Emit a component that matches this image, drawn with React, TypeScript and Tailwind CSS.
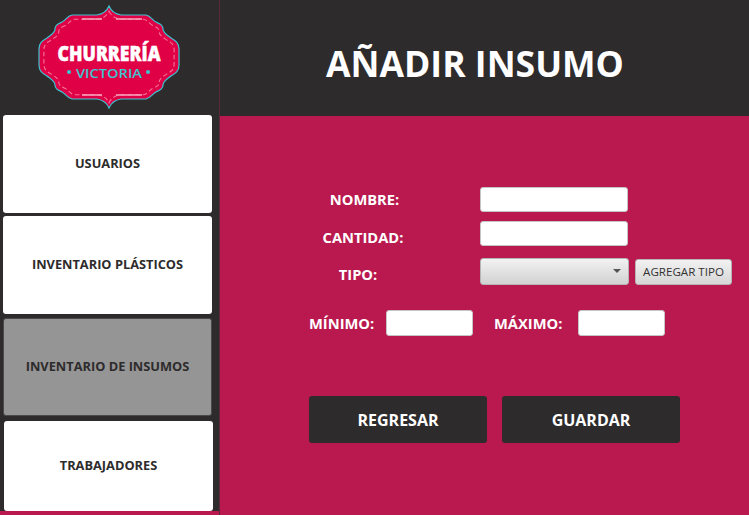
const menuBase =
  "flex items-center justify-center rounded-[3px] text-[12.8px] font-bold text-[#2d2b2c]";

const logoOutline =
  "M71 1 C73 6 77 9 83 10 L108 10 C113 11 114 15 118 17 C122 19 125 20 125 24 C125 28 129 30 133 33 C138 36 141 38 141 44 L141 60 C141 66 138 68 133 71 C129 74 125 76 125 80 C125 84 122 85 118 87 C114 89 113 93 108 94 L83 94 C77 95 73 98 71 103 C69 98 65 95 59 94 L34 94 C29 93 28 89 24 87 C20 85 17 84 17 80 C17 76 13 74 9 71 C4 68 1 66 1 60 L1 44 C1 38 4 36 9 33 C13 30 17 28 17 24 C17 20 20 19 24 17 C28 15 29 11 34 10 L59 10 C65 9 69 6 71 1 Z";

function Logo() {
  return (
    <svg width="142" height="104" viewBox="0 0 142 104" className="block">
      <path d={logoOutline} fill="#e00046" stroke="#3cc4d0" strokeWidth="1.2" />
      <path
        d={logoOutline}
        fill="none"
        stroke="#f27396"
        strokeWidth="1.2"
        strokeDasharray="5 3"
        transform="translate(71 52) scale(0.93 0.9) translate(-71 -52)"
      />
      <path d="M44 14 L64 14 M78 14 L104 14 M44 90 L64 90 M78 90 L104 90" stroke="#f9a6bc" strokeWidth="1.5" fill="none" />
      <text x="71" y="56" textAnchor="middle" textLength="103" lengthAdjust="spacingAndGlyphs" fontFamily="'Open Sans', sans-serif" fontWeight="800" fontSize="21" fill="#ffffff" stroke="#ffffff" strokeWidth="0.5">
        CHURRERÍA
      </text>
      <text x="71" y="72.5" textAnchor="middle" textLength="66" lengthAdjust="spacingAndGlyphs" fontFamily="'Open Sans', sans-serif" fontWeight="600" fontSize="13" fill="#3cc4d0">
        VICTORIA
      </text>
      <circle cx="31" cy="67" r="2" fill="#3cc4d0" />
      <circle cx="110" cy="67" r="2" fill="#3cc4d0" />
    </svg>
  );
}

function Field({ className }: { className: string }) {
  return <div className={`rounded-[3px] border border-[#c4c4c4] bg-white ${className}`} />;
}

export default function App() {
  return (
    <div className="flex h-[515px] w-[749px] overflow-hidden bg-[#b9194e] font-['Open_Sans',sans-serif]">
      {/* Menú lateral */}
      <aside className="flex h-[511px] w-[219px] shrink-0 flex-col bg-[#2d2b2c]">
        <div className="flex h-[115px] shrink-0 items-start pl-[38px] pt-[5px]">
          <Logo />
        </div>
        <div className={`${menuBase} ml-[3px] h-[98px] w-[209px] bg-white`}>USUARIOS</div>
        <div className={`${menuBase} ml-[3px] mt-[3px] h-[98px] w-[209px] bg-white`}>INVENTARIO PLÁSTICOS</div>
        <div className={`${menuBase} ml-[3px] mt-[4px] h-[98px] w-[209px] border border-[#4a4a4a] bg-[#959595]`}>INVENTARIO DE INSUMOS</div>
        <div className={`${menuBase} ml-[4px] mt-[5px] h-[90px] w-[209px] bg-white`}>TRABAJADORES</div>
      </aside>

      <main className="flex min-w-0 flex-1 flex-col border-l border-[#5a2a3c]">
        <header className="flex h-[116px] shrink-0 items-center bg-[#2d2b2c] pl-[106px] pt-[11px]">
          <h1 className="text-[35.6px] leading-none font-bold text-white">AÑADIR INSUMO</h1>
        </header>

        {/* Formulario */}
        <div className="flex flex-col pt-[71px] text-[14.7px] font-bold text-white">
          <div className="flex h-[25px] items-center">
            <span className="w-[260px] pl-[29px] text-center leading-none">NOMBRE:</span>
            <Field className="h-[25px] w-[148px]" />
          </div>
          <div className="mt-[9px] flex h-[25px] items-center">
            <span className="w-[260px] pl-[26px] pt-[7px] text-center leading-none">CANTIDAD:</span>
            <Field className="h-[25px] w-[148px]" />
          </div>
          <div className="mt-[12px] flex h-[27px] items-center">
            <span className="w-[260px] pl-[16px] pt-[5px] text-center leading-none">TIPO:</span>
            <div className="relative h-[27px] w-[149px] rounded-[3px] border border-[#b4b4b4] bg-gradient-to-b from-[#f2f2f2] to-[#d2d2d2]">
              <div className="absolute right-[7px] top-[10px] h-0 w-0 border-x-[4px] border-t-[4px] border-x-transparent border-t-[#555555]" />
            </div>
            <button className="ml-[6px] mt-[1px] h-[26px] w-[97px] rounded-[3px] border border-[#b4b4b4] bg-gradient-to-b from-[#f2f2f2] to-[#d6d6d6] text-[11.6px] leading-none font-normal text-[#333333]">
              AGREGAR TIPO
            </button>
          </div>
          <div className="mt-[25px] flex h-[26px] items-center pl-[89px]">
            <span className="w-[66px] leading-none whitespace-nowrap">MÍNIMO:</span>
            <Field className="ml-[11px] h-[26px] w-[87px]" />
            <span className="ml-[21px] w-[70px] leading-none whitespace-nowrap">MÁXIMO:</span>
            <Field className="ml-[14px] h-[26px] w-[87px]" />
          </div>
          <div className="mt-[60px] flex gap-[15px] pl-[89px]">
            <button className="h-[47px] w-[178px] rounded-[3px] bg-[#2d2b2c] text-[16px] font-bold text-white">REGRESAR</button>
            <button className="h-[47px] w-[178px] rounded-[3px] bg-[#2d2b2c] text-[16px] font-bold text-white">GUARDAR</button>
          </div>
        </div>
      </main>
    </div>
  );
}
